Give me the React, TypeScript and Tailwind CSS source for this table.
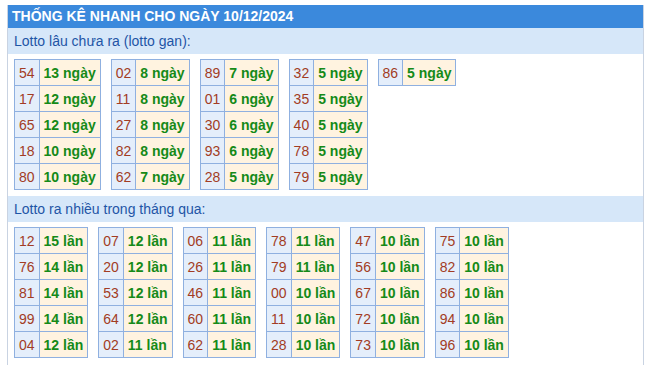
type Pair = [string, string];

const ganTables: Pair[][] = [
  [["54", "13 ngày"], ["17", "12 ngày"], ["65", "12 ngày"], ["18", "10 ngày"], ["80", "10 ngày"]],
  [["02", "8 ngày"], ["11", "8 ngày"], ["27", "8 ngày"], ["82", "8 ngày"], ["62", "7 ngày"]],
  [["89", "7 ngày"], ["01", "6 ngày"], ["30", "6 ngày"], ["93", "6 ngày"], ["28", "5 ngày"]],
  [["32", "5 ngày"], ["35", "5 ngày"], ["40", "5 ngày"], ["78", "5 ngày"], ["79", "5 ngày"]],
  [["86", "5 ngày"]],
];

const nhieuTables: Pair[][] = [
  [["12", "15 lần"], ["76", "14 lần"], ["81", "14 lần"], ["99", "14 lần"], ["04", "12 lần"]],
  [["07", "12 lần"], ["20", "12 lần"], ["53", "12 lần"], ["64", "12 lần"], ["02", "11 lần"]],
  [["06", "11 lần"], ["26", "11 lần"], ["46", "11 lần"], ["60", "11 lần"], ["62", "11 lần"]],
  [["78", "11 lần"], ["79", "11 lần"], ["00", "10 lần"], ["11", "10 lần"], ["28", "10 lần"]],
  [["47", "10 lần"], ["56", "10 lần"], ["67", "10 lần"], ["72", "10 lần"], ["73", "10 lần"]],
  [["75", "10 lần"], ["82", "10 lần"], ["86", "10 lần"], ["94", "10 lần"], ["96", "10 lần"]],
];

function LotoTable({ rows }: { rows: Pair[] }) {
  return (
    <table className="border-collapse self-start">
      <tbody>
        {rows.map(([num, val]) => (
          <tr key={num} className="h-[26px]">
            <td className="border border-[#8fb0e0] bg-[#e4eefb] px-[4px] py-0 text-[#a23c24]">
              {num}
            </td>
            <td className="border border-[#8fb0e0] bg-[#fff3e0] px-[4px] py-0 font-bold text-[#158a18]">
              {val}
            </td>
          </tr>
        ))}
      </tbody>
    </table>
  );
}

function Section({ title, tables }: { title: string; tables: Pair[][] }) {
  return (
    <div>
      <div className="flex h-[26px] items-center bg-[#d6e7f9] px-[6px] text-[14px] text-[#1f55a6]">
        {title}
      </div>
      <div className="flex gap-[10px] px-[6px] pt-[5px] pb-[6px] text-[14px] leading-[16px]">
        {tables.map((rows, i) => (
          <LotoTable key={i} rows={rows} />
        ))}
      </div>
    </div>
  );
}

export default function App() {
  return (
    <div
      className="min-h-[365px] bg-white px-[7px] pt-[5px]"
      style={{ fontFamily: '"Liberation Sans", Arial, sans-serif' }}
    >
      <div className="min-h-[360px] border-x border-[#c9d3e2] bg-white">
        <div className="flex h-[23px] items-center bg-[#3b89dc] px-[4px] text-[14px] font-bold text-white">
          THỐNG KÊ NHANH CHO NGÀY 10/12/2024
        </div>
        <Section title="Lotto lâu chưa ra (lotto gan):" tables={ganTables} />
        <Section title="Lotto ra nhiều trong tháng qua:" tables={nhieuTables} />
      </div>
    </div>
  );
}
